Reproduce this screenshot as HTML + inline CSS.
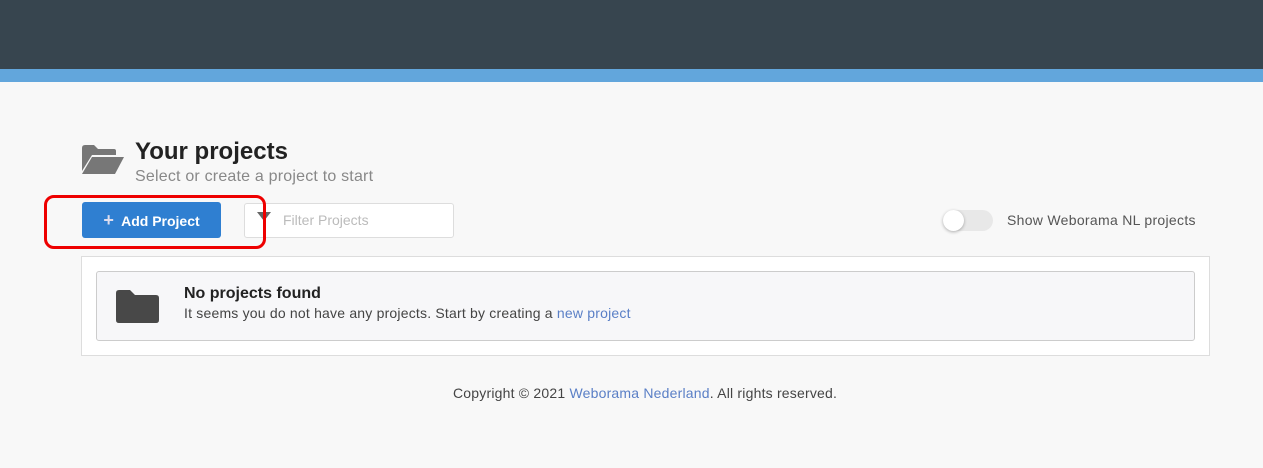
<!DOCTYPE html>
<html><head><style>
body{margin:0;width:1263px;height:468px;background:#f8f8f8;font-family:"Liberation Sans",sans-serif;position:relative;overflow:hidden}
.hd{position:absolute;left:0;top:0;width:1263px;height:69px;background:#37454f}
.bl{position:absolute;left:0;top:69px;width:1263px;height:13px;background:#62a6dc}
.a{position:absolute}
</style></head><body>
<div class="hd"></div><div class="bl"></div>
<svg class="a" style="left:82px;top:145px" width="42" height="30" viewBox="0 0 42 30"><path d="M0 3Q0 0 3 0H12L16 4H32Q34 4 34 6V10H10L0 26Z" fill="#777"/><path d="M10 12H42L33 29H0Z" fill="#777"/></svg>
<div class="a" style="left:135px;top:138px;font-size:24px;font-weight:bold;color:#222">Your projects</div>
<div class="a" style="left:135px;top:168px;font-size:16px;color:#888;letter-spacing:.2px">Select or create a project to start</div>
<div class="a" style="left:82px;top:202px;width:139px;height:36px;background:#2f7fd1;border-radius:3px;color:#fff;font-weight:bold;font-size:14px;line-height:36px;text-align:center"><span style="font-size:18px;color:#dde">+</span>&nbsp; Add Project</div>
<div class="a" style="left:244px;top:203px;width:208px;height:33px;background:#fff;border:1px solid #ddd;border-radius:3px"></div>
<div class="a" style="left:257px;top:212px;width:0;height:0;border-left:7px solid transparent;border-right:7px solid transparent;border-top:9px solid #666"></div>
<div class="a" style="left:283px;top:212px;font-size:14px;color:#bbb">Filter Projects</div>
<div class="a" style="left:44px;top:195px;width:216px;height:48px;border:3px solid #e00;border-radius:10px"></div>
<div class="a" style="left:943px;top:210px;width:50px;height:21px;background:#e8e8e8;border-radius:11px"></div>
<div class="a" style="left:943px;top:210px;width:21px;height:21px;background:#fff;border-radius:50%;box-shadow:0 1px 3px rgba(0,0,0,.3)"></div>
<div class="a" style="left:1007px;top:212px;font-size:14px;color:#555;letter-spacing:.3px">Show Weborama NL projects</div>
<div class="a" style="left:81px;top:256px;width:1127px;height:98px;background:#fff;border:1px solid #ddd"></div>
<div class="a" style="left:96px;top:271px;width:1097px;height:68px;background:#f7f7f9;border:1px solid #ccc;border-radius:3px"></div>
<svg class="a" style="left:116px;top:290px" width="43" height="33" viewBox="0 0 43 33"><path d="M0 3Q0 0 3 0H14L19 5H40Q43 5 43 8V30Q43 33 40 33H3Q0 33 0 30Z" fill="#484848"/></svg>
<div class="a" style="left:184px;top:285px;font-size:16px;font-weight:bold;color:#222">No projects found</div>
<div class="a" style="left:184px;top:305px;font-size:14px;color:#444;letter-spacing:.2px">It seems you do not have any projects. Start by creating a <span style="color:#5a7fc6">new project</span></div>
<div class="a" style="left:453px;top:385px;font-size:14px;color:#444;letter-spacing:.2px">Copyright © 2021 <span style="color:#5a7fc6">Weborama Nederland</span>. All rights reserved.</div>
</body></html>
